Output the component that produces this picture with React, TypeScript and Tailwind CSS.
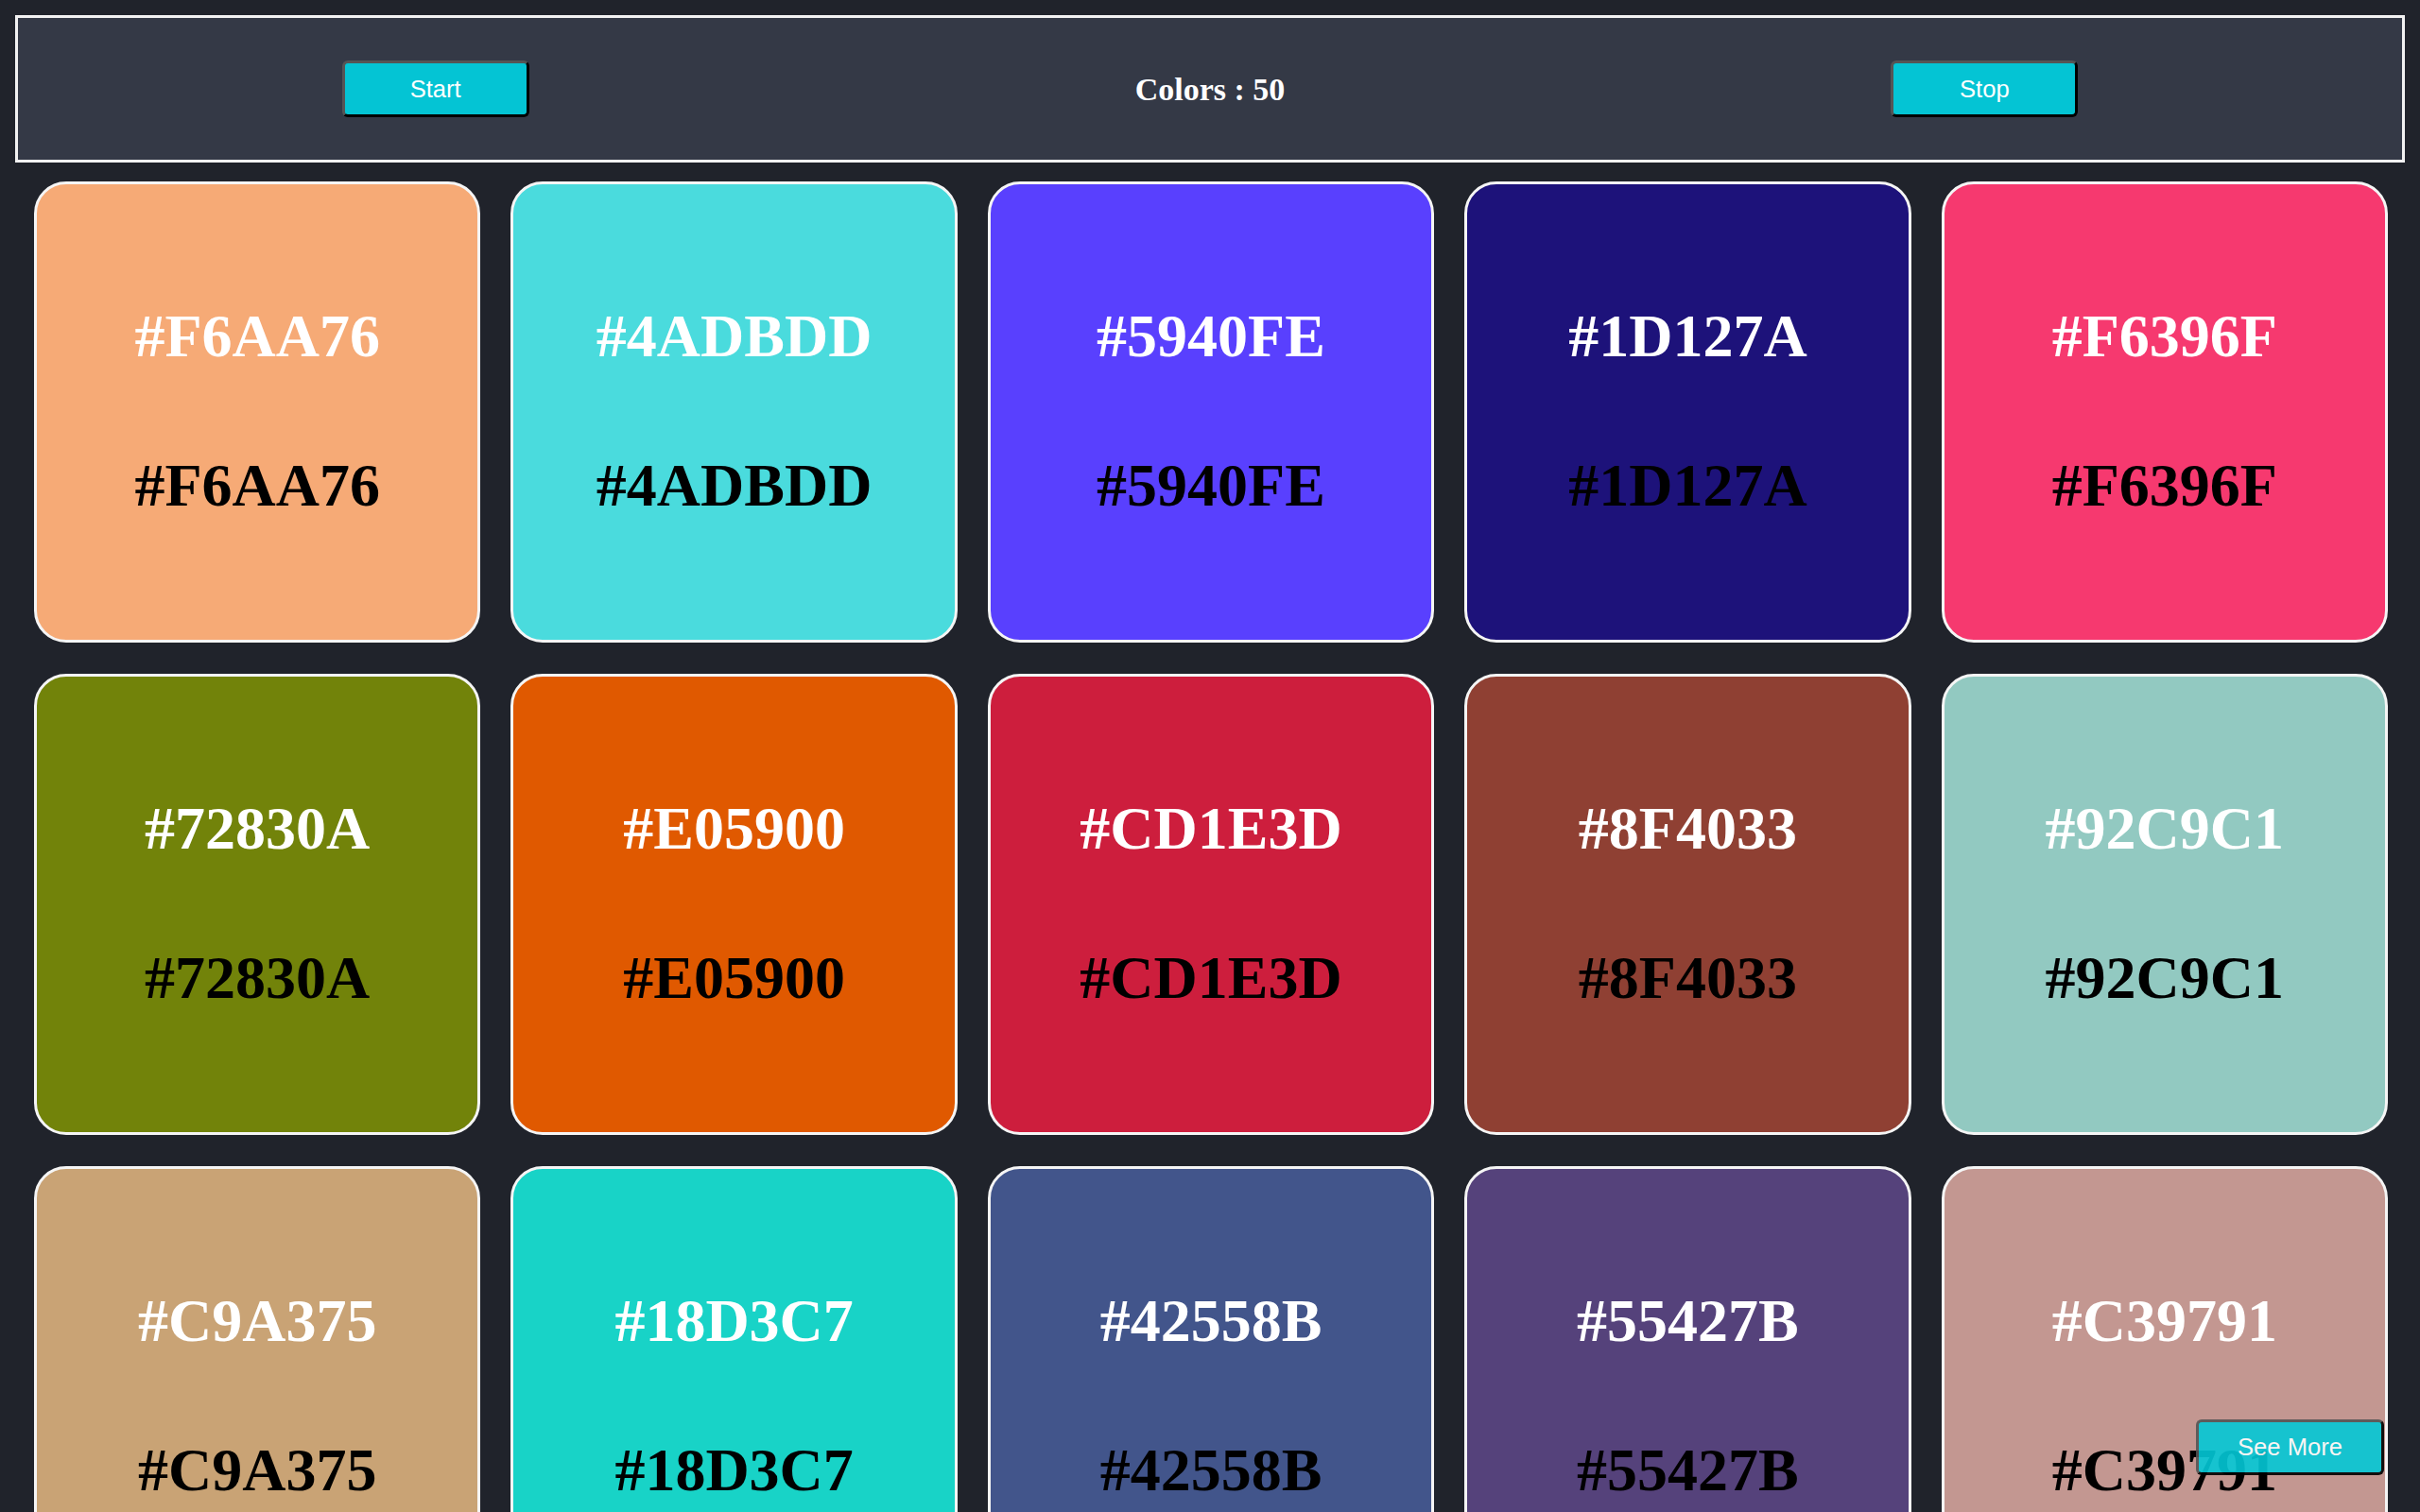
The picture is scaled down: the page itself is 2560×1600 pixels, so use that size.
const colors = [
  '#F6AA76', '#4ADBDD', '#5940FE', '#1D127A', '#F6396F',
  '#72830A', '#E05900', '#CD1E3D', '#8F4033', '#92C9C1',
  '#C9A375', '#18D3C7', '#42558B', '#55427B', '#C39791',
  '#3B8E5A', '#A14FD2', '#E8C21B', '#2A6FB3', '#D47A9C',
  '#6B2E1F', '#17A589', '#F08A24', '#5C6F7E', '#B3E04A',
  '#9E1C6B', '#4F83C7', '#E6D3A1', '#2D4B3A', '#C74E2E',
  '#7F9CF5', '#1B7A8C', '#DA5C8F', '#8A8A1F', '#3E2A6D',
  '#F2B5C4', '#0E5E4B', '#B86E2C', '#6ED0A3', '#A3324F',
  '#284E9B', '#E3A03F', '#52307A', '#91B84D', '#C23B9A',
  '#1F8ED1', '#7A4A2F', '#D9E06B', '#3F7F6E', '#EE5B3C',
]

function Btn({ label }: { label: string }) {
  return (
    <button className="flex h-[60px] w-[198px] items-center justify-center rounded-[6px] border-[3px] border-t-[#555555] border-l-[#555555] border-r-black border-b-black bg-[#04c4d4] font-['Liberation_Sans',Arial,sans-serif] text-[25.6px] text-white">
      {label}
    </button>
  )
}

export default function App() {
  return (
    <div className="min-h-screen bg-[#20232b] pt-[16px]">
      <header className="mx-[16px] grid h-[156px] grid-cols-3 items-center border-[3px] border-[#f2f2f2] bg-[#343946] px-[32px]">
        <div className="flex justify-center">
          <Btn label="Start" />
        </div>
        <h2 className="text-center font-['Liberation_Serif',serif] text-[34px] font-bold text-white">
          Colors : {colors.length}
        </h2>
        <div className="flex justify-center">
          <Btn label="Stop" />
        </div>
      </header>

      <main className="grid grid-cols-5 gap-x-[32px] gap-y-[33px] pl-[36px] pr-[34px] pt-[20px] pb-[40px]">
        {colors.map((c, i) => (
          <div
            key={i}
            className="flex h-[488px] flex-col items-center justify-center gap-[87px] rounded-[34px] border-[3px] border-[#f5f5f5] pb-[3px] font-['Liberation_Serif',serif] text-[64px] font-bold leading-[71px]"
            style={{ backgroundColor: c }}
          >
            <h1 className="text-white">{c}</h1>
            <h1 className="text-black">{c}</h1>
          </div>
        ))}
      </main>

      <button className="fixed right-[38px] bottom-[39px] flex h-[59px] w-[199px] items-center justify-center rounded-[6px] border-[3px] border-t-[#555555] border-l-[#555555] border-r-black border-b-black bg-[#04c8d6] font-['Liberation_Sans',Arial,sans-serif] text-[25.6px] text-white opacity-90">
        See More
      </button>
    </div>
  )
}
